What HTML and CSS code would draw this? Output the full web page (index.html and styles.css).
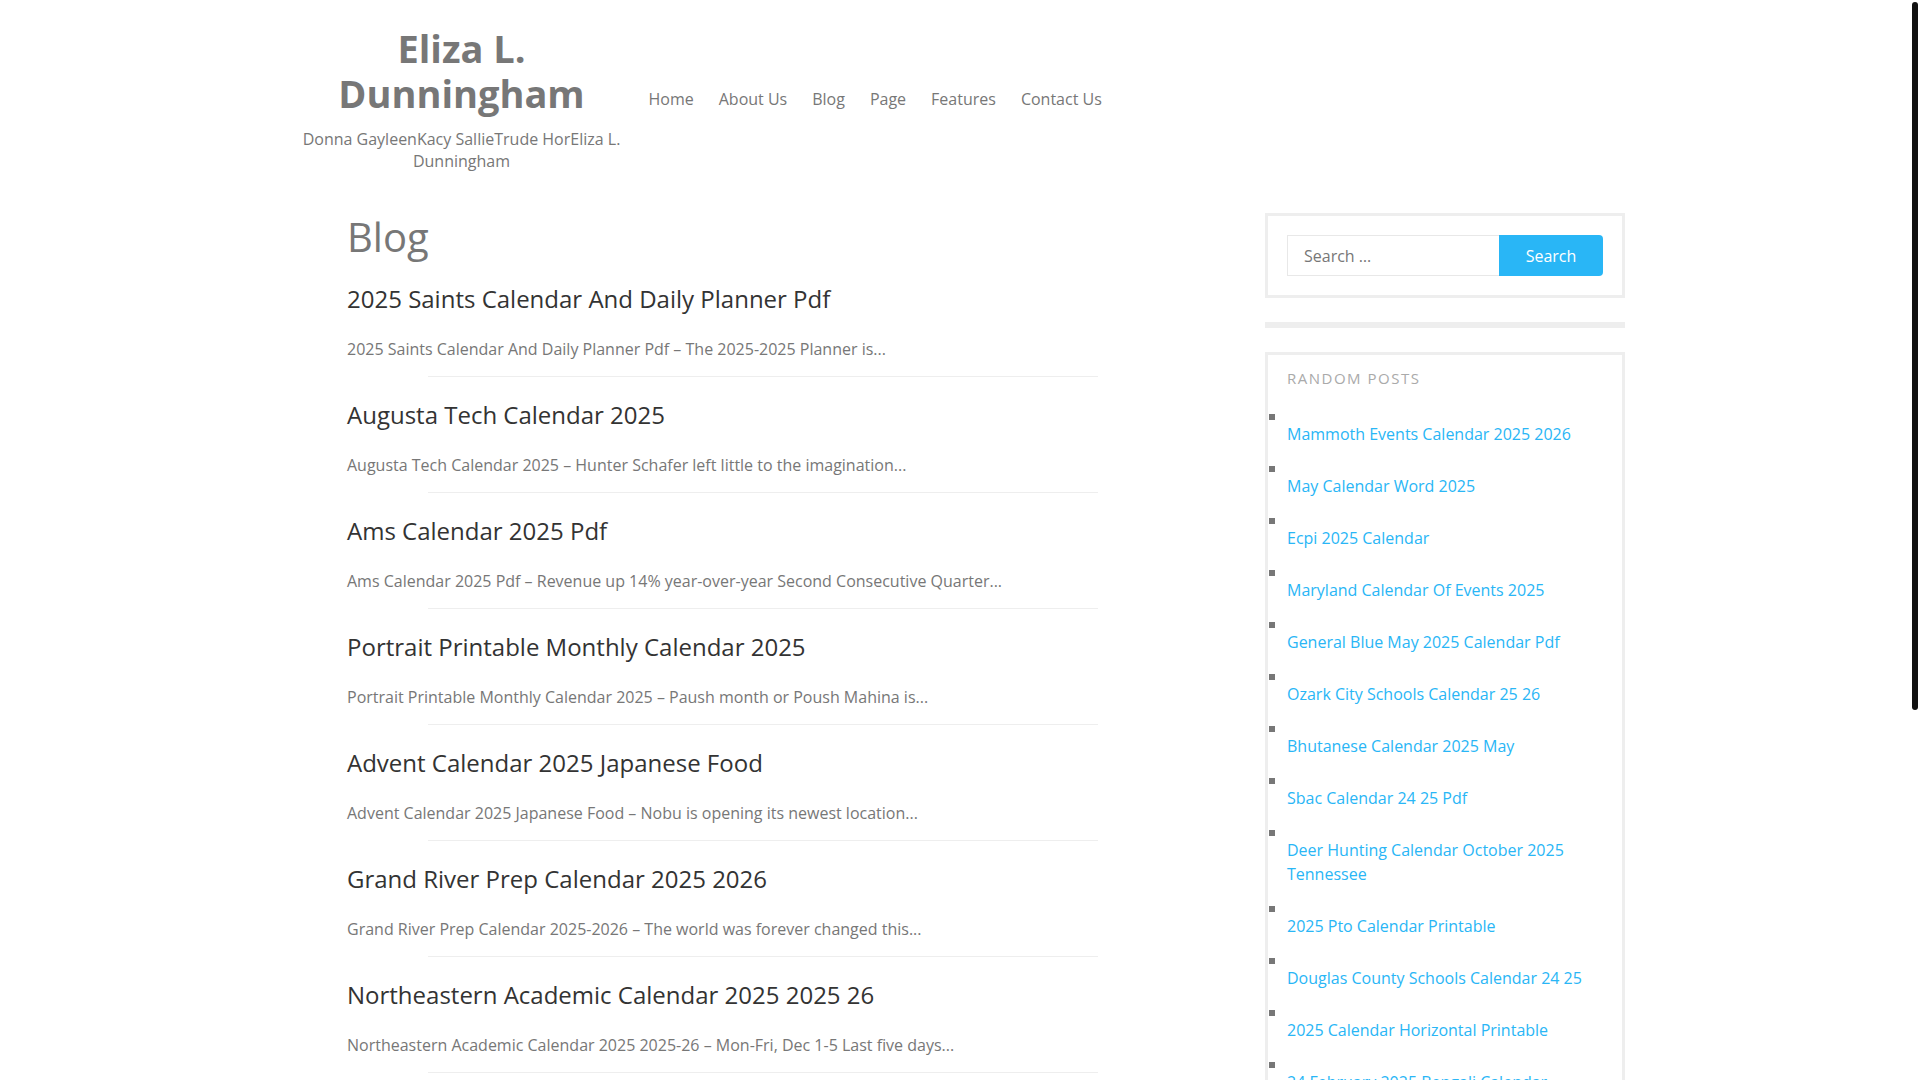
FILE: index.html
```html
<!DOCTYPE html>
<html lang="en">
<head>
    <meta charset="UTF-8">
    <meta name="viewport" content="width=device-width, initial-scale=1.0">
    <title>Blog – Eliza L. Dunningham</title>
    <link rel="stylesheet" href="styles.css">
</head>
<body>
    <div class="scroll-thumb"></div>

    <div class="container">
        <header class="site-header">
            <div class="branding">
                <div class="site-title">Eliza L. Dunningham</div>
                <div class="site-description">Donna GayleenKacy SallieTrude HorEliza L. Dunningham</div>
            </div>
            <nav class="main-nav">
                <ul>
                    <li><a href="#">Home</a></li>
                    <li><a href="#">About Us</a></li>
                    <li><a href="#">Blog</a></li>
                    <li><a href="#">Page</a></li>
                    <li><a href="#">Features</a></li>
                    <li><a href="#">Contact Us</a></li>
                </ul>
            </nav>
        </header>

        <div class="site-main">
            <main class="content">
                <h1 class="page-title">Blog</h1>

                <article class="post">
                    <h2 class="post-title"><a href="#">2025 Saints Calendar And Daily Planner Pdf</a></h2>
                    <p class="post-excerpt">2025 Saints Calendar And Daily Planner Pdf – The 2025-2025 Planner is...</p>
                </article>
                <article class="post">
                    <h2 class="post-title"><a href="#">Augusta Tech Calendar 2025</a></h2>
                    <p class="post-excerpt">Augusta Tech Calendar 2025 – Hunter Schafer left little to the imagination...</p>
                </article>
                <article class="post">
                    <h2 class="post-title"><a href="#">Ams Calendar 2025 Pdf</a></h2>
                    <p class="post-excerpt">Ams Calendar 2025 Pdf – Revenue up 14% year-over-year Second Consecutive Quarter...</p>
                </article>
                <article class="post">
                    <h2 class="post-title"><a href="#">Portrait Printable Monthly Calendar 2025</a></h2>
                    <p class="post-excerpt">Portrait Printable Monthly Calendar 2025 – Paush month or Poush Mahina is...</p>
                </article>
                <article class="post">
                    <h2 class="post-title"><a href="#">Advent Calendar 2025 Japanese Food</a></h2>
                    <p class="post-excerpt">Advent Calendar 2025 Japanese Food – Nobu is opening its newest location...</p>
                </article>
                <article class="post">
                    <h2 class="post-title"><a href="#">Grand River Prep Calendar 2025 2026</a></h2>
                    <p class="post-excerpt">Grand River Prep Calendar 2025-2026 – The world was forever changed this...</p>
                </article>
                <article class="post">
                    <h2 class="post-title"><a href="#">Northeastern Academic Calendar 2025 2025 26</a></h2>
                    <p class="post-excerpt">Northeastern Academic Calendar 2025 2025-26 – Mon-Fri, Dec 1-5 Last five days...</p>
                </article>
            </main>

            <aside class="sidebar">
                <section class="widget widget-search">
                    <form class="search-form">
                        <input type="search" class="search-field" placeholder="Search …">
                        <button type="button" class="search-submit">Search</button>
                    </form>
                </section>

                <section class="widget widget-empty"></section>

                <section class="widget widget-random">
                    <h3 class="widget-title">Random Posts</h3>
                    <ul>
                        <li><a href="#">Mammoth Events Calendar 2025 2026</a></li>
                        <li><a href="#">May Calendar Word 2025</a></li>
                        <li><a href="#">Ecpi 2025 Calendar</a></li>
                        <li><a href="#">Maryland Calendar Of Events 2025</a></li>
                        <li><a href="#">General Blue May 2025 Calendar Pdf</a></li>
                        <li><a href="#">Ozark City Schools Calendar 25 26</a></li>
                        <li><a href="#">Bhutanese Calendar 2025 May</a></li>
                        <li><a href="#">Sbac Calendar 24 25 Pdf</a></li>
                        <li><a href="#">Deer Hunting Calendar October 2025 Tennessee</a></li>
                        <li><a href="#">2025 Pto Calendar Printable</a></li>
                        <li><a href="#">Douglas County Schools Calendar 24 25</a></li>
                        <li><a href="#">2025 Calendar Horizontal Printable</a></li>
                        <li><a href="#">24 February 2025 Bengali Calendar</a></li>
                    </ul>
                </section>
            </aside>
        </div>
    </div>
</body>
</html>
```

FILE: styles.css
```css
body {
    margin: 0;
    padding-right: 8px;
    font-family: "Open Sans", "Liberation Sans", sans-serif;
    font-size: 16px;
    line-height: 24px;
    color: #777;
    background: #fff;
}

a {
    text-decoration: none;
}

/* thin scrollbar drawn over the right edge */
.scroll-thumb {
    position: fixed;
    top: 2px;
    right: 2px;
    width: 6px;
    height: 708px;
    border-radius: 3px;
    background: #111;
}

.container {
    width: 1338px;
    margin: 0 auto;
}

/* header */

.site-header {
    display: flex;
    align-items: center;
    padding-top: 26px;
}

.branding {
    width: 349px;
    text-align: center;
}

.site-title {
    font-size: 38px;
    line-height: 45px;
    font-weight: 700;
    color: #777;
}

.site-description {
    margin-top: 12px;
    font-size: 16px;
    line-height: 22px;
    color: #777;
}

.main-nav ul {
    display: flex;
    list-style: none;
    margin: 0;
    padding: 0;
}

.main-nav a {
    display: block;
    padding: 0 12.5px;
    color: #777;
    line-height: 24px;
}

/* main area */

.site-main {
    display: grid;
    grid-template-columns: 751px 360px;
    justify-content: space-between;
    padding-left: 60px;
    margin-top: 41px;
}

.page-title {
    margin: 0 0 24px;
    font-size: 40px;
    line-height: 47px;
    font-weight: 400;
    color: #777;
}

.post {
    padding-bottom: 23px;
}

.post::after {
    content: "";
    display: block;
    height: 1px;
    margin-left: 81px;
    background: #eee;
}

.post-title {
    margin: 0 0 23px;
    font-size: 24px;
    line-height: 30px;
    font-weight: 400;
}

.post-title a {
    color: #333;
}

.post-excerpt {
    margin: 0;
    padding-bottom: 15px;
    color: #777;
}

/* sidebar */

.widget {
    border: 3px solid #eee;
    padding: 19px;
    margin-bottom: 24px;
}

.widget-empty {
    padding: 0;
}

.search-form {
    display: flex;
}

.search-field {
    flex: 1;
    min-width: 0;
    height: 41px;
    box-sizing: border-box;
    border: 1px solid #e8e8e8;
    border-right: 0;
    padding: 0 16px;
    font-family: inherit;
    font-size: 16px;
    color: #777;
    outline: none;
}

.search-field::placeholder {
    color: #777;
}

.search-submit {
    width: 104px;
    height: 41px;
    border: 0;
    border-radius: 0 4px 4px 0;
    background: #29b6f6;
    color: #fff;
    font-family: inherit;
    font-size: 16px;
}

.widget-random {
    padding-top: 13px;
}

.widget-title {
    margin: 0 0 26px;
    font-size: 15px;
    line-height: 20px;
    font-weight: 400;
    letter-spacing: 1.5px;
    text-transform: uppercase;
    color: #aaa;
}

.widget-random ul {
    list-style: none;
    margin: 0;
    padding: 0;
}

.widget-random li {
    padding-bottom: 20px;
}

.widget-random li::before {
    content: "";
    display: block;
    width: 6px;
    height: 6px;
    margin: 0 0 2px -18px;
    background: #777;
}

.widget-random a {
    display: block;
    color: #29b6f6;
}
```
